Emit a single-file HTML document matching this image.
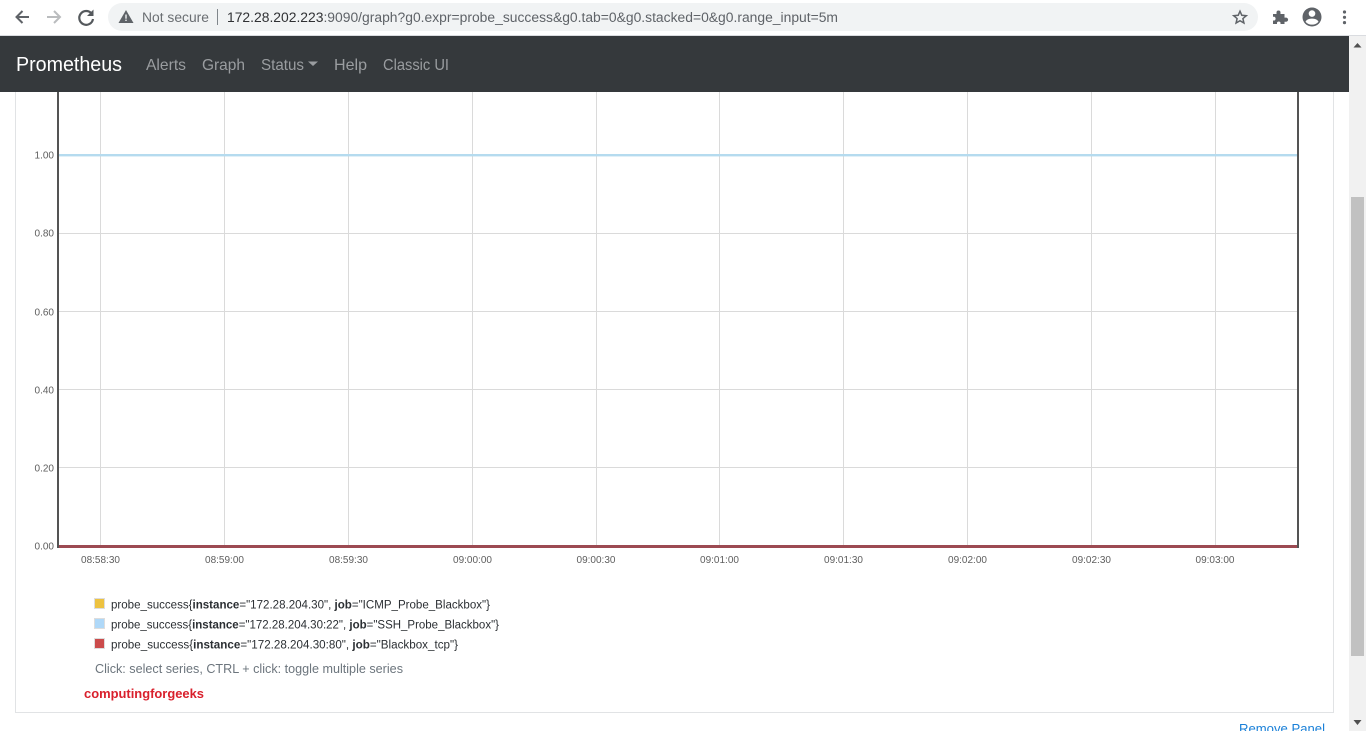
<!DOCTYPE html>
<html><head><meta charset="utf-8"><title>Prometheus Time Series Collection and Processing Server</title>
<style>
html,body{margin:0;padding:0;width:1366px;height:731px;overflow:hidden;background:#fff}
svg{display:block;position:absolute;left:0;top:0}
text{font-family:"Liberation Sans",sans-serif}
</style></head><body>
<svg width="1366" height="731" viewBox="0 0 1366 731" xmlns="http://www.w3.org/2000/svg">
<rect width="1366" height="731" fill="#fff"/>
<!-- browser toolbar -->
<rect x="0" y="35" width="1366" height="1" fill="#dadce0"/>
<rect x="108" y="3" width="1150" height="28" rx="14" fill="#f1f3f4"/>
<path d="M29 17H17M22.5 11L16.5 17L22.5 23" fill="none" stroke="#5f6368" stroke-width="2"/>
<path d="M47 17H59.5M54 11L60 17L54 23" fill="none" stroke="#babcbe" stroke-width="2"/>
<path d="M91.5 13.5A6.9 6.9 0 1 0 93 19" fill="none" stroke="#55595d" stroke-width="2.2"/>
<path d="M93.5 9.5V16H87Z" fill="#55595d"/>
<path d="M126 10L133.5 23H118.5Z" fill="#5f6368"/>
<rect x="125.3" y="14.5" width="1.4" height="4.2" fill="#f1f3f4"/><rect x="125.3" y="19.6" width="1.4" height="1.4" fill="#f1f3f4"/>
<text x="142" y="22" font-size="13.5" fill="#6a6e72" textLength="67" lengthAdjust="spacingAndGlyphs">Not secure</text>
<rect x="217" y="9" width="1" height="16" fill="#80868b"/>
<text x="227" y="22" font-size="13.5" fill="#5f6368" textLength="611" lengthAdjust="spacingAndGlyphs"><tspan fill="#303134">172.28.202.223</tspan>:9090/graph?g0.expr=probe_success&amp;g0.tab=0&amp;g0.stacked=0&amp;g0.range_input=5m</text>
<path d="M1240 11.2L1241.8 15.3L1246.3 15.7L1242.9 18.6L1243.9 23L1240 20.7L1236.1 23L1237.1 18.6L1233.7 15.7L1238.2 15.3Z" fill="none" stroke="#5f6368" stroke-width="1.5"/>
<path d="M1273 14H1276.5V12.5A2 2 0 0 1 1280.5 12.5V14H1284.5V17.6H1286A2.1 2.1 0 0 1 1286 21.8H1284.5V24H1280.5V22.5A2 2 0 0 0 1277 22.5V24H1273V20.5H1274.5A2.2 2.2 0 0 0 1274.5 16.7H1273Z" fill="#5f6368"/>
<circle cx="1312" cy="17" r="9.5" fill="#5f6368"/>
<circle cx="1312" cy="13.6" r="3.3" fill="#fff"/>
<path d="M1305.5 21.6C1307 19 1310 18.6 1312 18.6C1314 18.6 1317 19 1318.5 21.6C1317 23.6 1314.8 24.6 1312 24.6C1309.2 24.6 1307 23.6 1305.5 21.6Z" fill="#fff"/>
<circle cx="1344.5" cy="12" r="1.6" fill="#5f6368"/><circle cx="1344.5" cy="17.3" r="1.6" fill="#5f6368"/><circle cx="1344.5" cy="22.6" r="1.6" fill="#5f6368"/>
<!-- navbar -->
<rect x="0" y="36" width="1349" height="56" fill="#35393c"/>
<text x="16" y="71" font-size="20" fill="#fff" textLength="106" lengthAdjust="spacingAndGlyphs">Prometheus</text>
<text x="146" y="70" font-size="16" fill="#9a9da0" textLength="40" lengthAdjust="spacingAndGlyphs">Alerts</text>
<text x="202" y="70" font-size="16" fill="#9a9da0" textLength="43" lengthAdjust="spacingAndGlyphs">Graph</text>
<text x="261" y="70" font-size="16" fill="#9a9da0" textLength="43" lengthAdjust="spacingAndGlyphs">Status</text>
<path d="M308 61.5H318L313 66Z" fill="#9a9da0"/>
<text x="334" y="70" font-size="16" fill="#9a9da0" textLength="33" lengthAdjust="spacingAndGlyphs">Help</text>
<text x="383" y="70" font-size="16" fill="#9a9da0" textLength="66" lengthAdjust="spacingAndGlyphs">Classic UI</text>
<!-- scrollbar -->
<rect x="1349" y="36" width="17" height="695" fill="#f1f1f1"/>
<rect x="1351" y="197" width="13" height="459" fill="#c1c1c1"/>
<path d="M1357.5 43L1361.5 47.5H1353.5Z" fill="#505050"/>
<path d="M1353.5 720H1361.5L1357.5 725Z" fill="#505050"/>
<!-- panel -->
<path d="M15.5 92V712.5H1333.5V92" fill="none" stroke="#e1e3e5" stroke-width="1"/>
<!-- grid -->
<g stroke="#dadada" stroke-width="1" fill="none">
<path d="M100.5 92V546M224.5 92V546M348.5 92V546M472.5 92V546M596.5 92V546M719.5 92V546M843.5 92V546M967.5 92V546M1091.5 92V546M1215.5 92V546"/>
<path d="M59 233.5H1297M59 311.5H1297M59 389.5H1297M59 467.5H1297"/>
</g>
<rect x="59" y="154" width="1238" height="2.4" fill="#b5dbef"/>
<rect x="57" y="545" width="1242" height="3" fill="#9c4a52"/>
<rect x="57" y="92" width="2" height="456" fill="#545454"/>
<rect x="1297" y="92" width="2" height="456" fill="#545454"/>
<!-- y labels -->
<g font-size="10" fill="#5e5e5e" text-anchor="end">
<text x="54" y="158.5">1.00</text><text x="54" y="236.5">0.80</text><text x="54" y="315.5">0.60</text><text x="54" y="393.5">0.40</text><text x="54" y="471.5">0.20</text><text x="54" y="549.5">0.00</text>
</g>
<!-- x labels -->
<g font-size="10" fill="#5e5e5e" text-anchor="middle">
<text x="100.5" y="563">08:58:30</text><text x="224.5" y="563">08:59:00</text><text x="348.5" y="563">08:59:30</text><text x="472.5" y="563">09:00:00</text><text x="596" y="563">09:00:30</text><text x="719.5" y="563">09:01:00</text><text x="843.5" y="563">09:01:30</text><text x="967.5" y="563">09:02:00</text><text x="1091.5" y="563">09:02:30</text><text x="1215" y="563">09:03:00</text>
</g>
<!-- legend -->
<rect x="94.5" y="598.5" width="10" height="10" fill="#edc240" stroke="#ddd"/>
<rect x="94.5" y="618.5" width="10" height="10" fill="#afd8f8" stroke="#ddd"/>
<rect x="94.5" y="638.5" width="10" height="10" fill="#cb4b4b" stroke="#ddd"/>
<g font-size="11.5" fill="#2b2f33">
<text x="111" y="608.5" textLength="379" lengthAdjust="spacingAndGlyphs">probe_success{<tspan font-weight="bold">instance</tspan>="172.28.204.30", <tspan font-weight="bold">job</tspan>="ICMP_Probe_Blackbox"}</text>
<text x="111" y="628.5" textLength="388" lengthAdjust="spacingAndGlyphs">probe_success{<tspan font-weight="bold">instance</tspan>="172.28.204.30:22", <tspan font-weight="bold">job</tspan>="SSH_Probe_Blackbox"}</text>
<text x="111" y="648.5" textLength="347" lengthAdjust="spacingAndGlyphs">probe_success{<tspan font-weight="bold">instance</tspan>="172.28.204.30:80", <tspan font-weight="bold">job</tspan>="Blackbox_tcp"}</text>
</g>
<text x="95" y="673" font-size="12.5" fill="#6c757d" textLength="308" lengthAdjust="spacingAndGlyphs">Click: select series, CTRL + click: toggle multiple series</text>
<text x="84" y="698" font-size="13" font-weight="bold" fill="#d9202c" textLength="120" lengthAdjust="spacingAndGlyphs">computingforgeeks</text>
<text x="1239" y="733" font-size="13" fill="#1a80d8" textLength="86" lengthAdjust="spacingAndGlyphs">Remove Panel</text>
</svg>
</body></html>
